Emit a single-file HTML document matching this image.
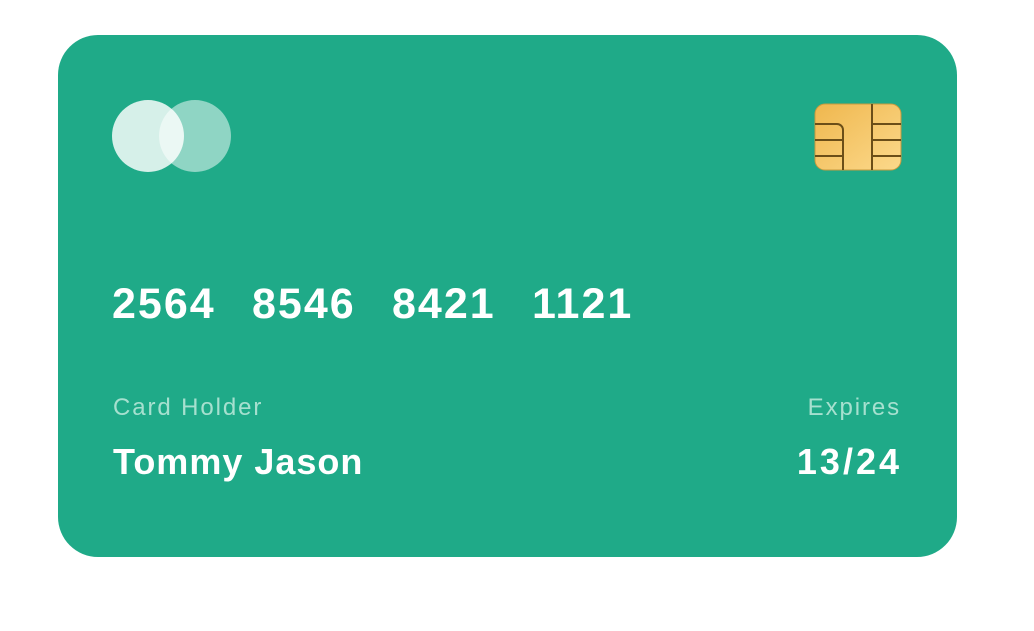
<!DOCTYPE html>
<html><head><style>
body{margin:0;width:1034px;height:631px;background:#fff;position:relative;overflow:hidden;font-family:"Liberation Sans",sans-serif}
.card{position:absolute;left:58px;top:35px;width:899px;height:522px;border-radius:40px;background:#1faa88}
.c{position:absolute;border-radius:50%;width:72px;height:72px;top:100px}
.t{position:absolute;color:#fff;font-weight:bold;white-space:nowrap}
.n{top:280px;font-size:43px;letter-spacing:2px}
.l{position:absolute;color:#a6e0cf;font-size:24px;top:394px;letter-spacing:1.9px}
.b{top:441px;font-size:36px;letter-spacing:1px}
</style></head><body>
<div class="card"></div>
<div class="c" style="left:112px;background:rgba(255,255,255,0.82)"></div>
<div class="c" style="left:159px;background:rgba(255,255,255,0.5)"></div>
<svg style="position:absolute;left:814px;top:103px" width="89" height="69" viewBox="814 103 89 69">
<defs><linearGradient id="g" x1="0" y1="0" x2="1" y2="1"><stop offset="0" stop-color="#efb74e"/><stop offset="1" stop-color="#fcd98b"/></linearGradient></defs>
<rect x="815" y="104" width="86" height="66" rx="10" fill="url(#g)" stroke="#c79a3e" stroke-width="1"/>
<g fill="none" stroke="#6b4e18" stroke-width="2">
<path d="M815 124H837a6 6 0 0 1 6 6V170"/>
<path d="M815 140H843M815 156H843"/>
<path d="M872 104V170M872 124H901M872 140H901M872 156H901"/>
</g></svg>
<div class="t n" style="left:112px">2564</div>
<div class="t n" style="left:252px">8546</div>
<div class="t n" style="left:392px">8421</div>
<div class="t n" style="left:532px">1121</div>
<div class="l" style="left:113px">Card Holder</div>
<div class="l" style="right:133px">Expires</div>
<div class="t b" style="left:113px">Tommy Jason</div>
<div class="t b" style="right:132px;letter-spacing:3px">13/24</div>
</body></html>
